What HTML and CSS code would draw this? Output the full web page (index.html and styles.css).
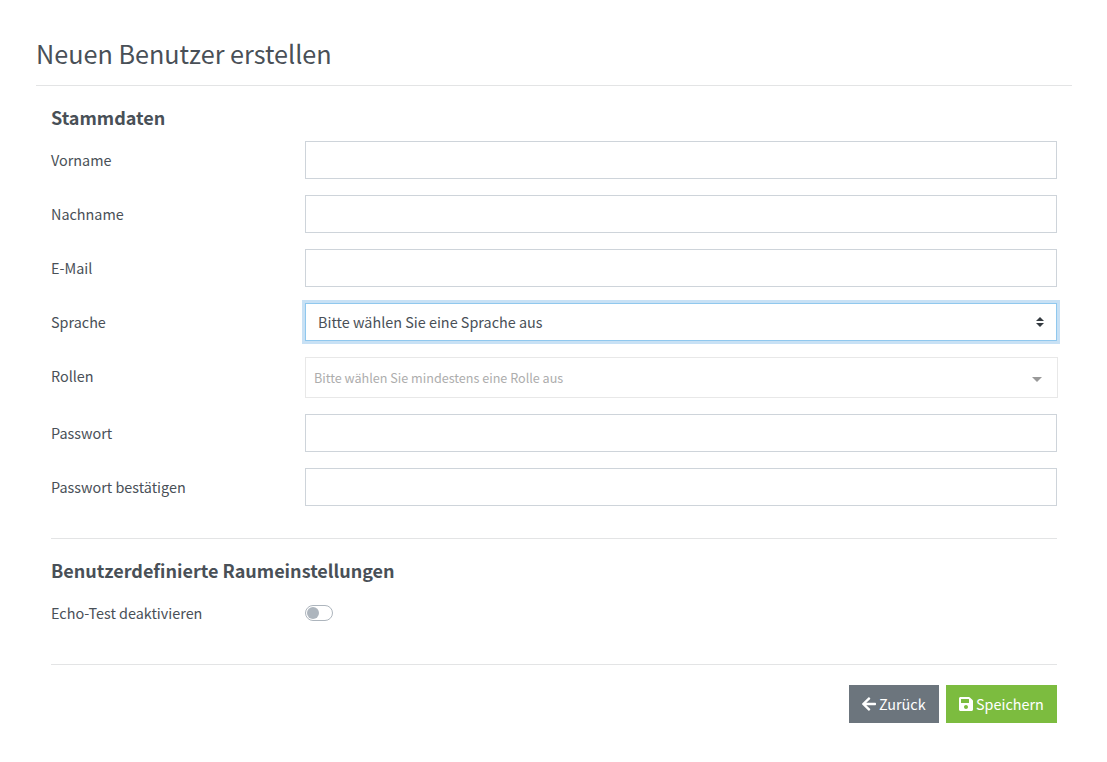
FILE: index.html
```html
<!DOCTYPE html>
<html lang="de">
<head>
<meta charset="utf-8">
<title>Neuen Benutzer erstellen</title>
<link rel="stylesheet" href="styles.css">
</head>
<body>
<main class="page">
  <h1 class="title"><span>Neuen Benutzer erstellen</span></h1>
  <form class="form">
    <h2 class="section-title">Stammdaten</h2>
    <div class="row"><label class="label" for="first">Vorname</label><input class="field" id="first" type="text"></div>
    <div class="row"><label class="label" for="last">Nachname</label><input class="field" id="last" type="text"></div>
    <div class="row"><label class="label" for="mail">E-Mail</label><input class="field" id="mail" type="email"></div>
    <div class="row"><span class="label">Sprache</span>
      <div class="field select" tabindex="0"><span>Bitte wählen Sie eine Sprache aus</span>
        <svg class="sort" viewBox="0 0 4 5" width="8" height="10"><path fill="#343a40" d="M2 0L0 2h4zm0 5L0 3h4z"/></svg>
      </div>
    </div>
    <div class="row"><span class="label">Rollen</span>
      <div class="roles"><span>Bitte wählen Sie mindestens eine Rolle aus</span><i class="caret"></i></div>
    </div>
    <div class="row"><label class="label" for="pw">Passwort</label><input class="field" id="pw" type="password"></div>
    <div class="row"><label class="label" for="pw2">Passwort bestätigen</label><input class="field" id="pw2" type="password"></div>
    <section class="section">
      <h2 class="section-title">Benutzerdefinierte Raumeinstellungen</h2>
      <div class="row"><span class="label">Echo-Test deaktivieren</span><span class="switch"><i class="knob"></i></span></div>
    </section>
    <footer class="actions">
      <button class="btn back" type="button"><svg class="icon" viewBox="0 0 448 512" width="14" height="16"><path fill="currentColor" d="M257.500 445.100l-22.200 22.200c-9.400 9.400-24.600 9.400-33.900 0L7 273c-9.400-9.400-9.400-24.600 0-33.900L201.400 44.700c9.400-9.400 24.600-9.400 33.900 0l22.200 22.200c9.500 9.500 9.300 25-.4 34.300L136.600 216H424c13.300 0 24 10.700 24 24v32c0 13.300-10.700 24-24 24H136.600l120.500 114.800c9.800 9.300 10 24.800.4 34.300z"/></svg><span>Zurück</span></button>
      <button class="btn save" type="button"><svg class="icon" viewBox="0 0 448 512" width="14" height="16"><path fill="currentColor" d="M433.941 129.941l-83.882-83.882A48 48 0 0 0 316.118 32H48C21.490 32 0 53.490 0 80v352c0 26.510 21.490 48 48 48h352c26.510 0 48-21.490 48-48V163.882a48 48 0 0 0-14.059-33.941zM224 416c-35.346 0-64-28.654-64-64 0-35.346 28.654-64 64-64s64 28.654 64 64c0 35.346-28.654 64-64 64zm96-304.520V212c0 6.627-5.373 12-12 12H76c-6.627 0-12-5.373-12-12V108c0-6.627 5.373-12 12-12h228.520c3.183 0 6.235 1.264 8.485 3.515l3.480 3.480A11.996 11.996 0 0 1 320 111.480z"/></svg><span>Speichern</span></button>
    </footer>
  </form>
</main>
</body>
</html>
```
FILE: styles.css
```css
* { box-sizing: border-box; }
body {
  margin: 0;
  background: #fff;
  color: #495057;
  font: 400 14.4px/24px "Noto Sans CJK SC", "Noto Sans", sans-serif;
}
.page { padding: 36px 35px 0 36px; }
.title {
  margin: 0;
  height: 50px;
  border-bottom: 1px solid #e3e4e5;
  font-size: 25.2px;
  font-weight: 400;
  line-height: 34px;
}
.form { padding: 20px 15px 0; }
.section-title { margin: 0 0 12px; font-size: 18px; font-weight: 700; line-height: 23px; }
.row { display: grid; grid-template-columns: 254px 1fr; margin-bottom: 16px; }
.label { padding-top: 7px; }
.field {
  width: 100%;
  height: 38px;
  padding: 6px 12px;
  border: 1px solid #ced4da;
  border-radius: 0;
  background: #fff;
  font: inherit;
  color: inherit;
  outline: 0;
}
.select {
  display: flex;
  align-items: center;
  justify-content: space-between;
  border-color: #90c8ee;
  box-shadow: 0 0 0 3px #c8e1f5;
}
.sort { display: block; }
.roles {
  display: flex;
  align-items: center;
  justify-content: space-between;
  width: 753px;
  height: 41px;
  padding: 0 15px 0 8px;
  border: 1px solid #e8e8e8;
  color: #adadad;
  font-size: 12.6px;
}
.caret {
  border: 5px solid transparent;
  border-top-color: #999;
  border-bottom: 0;
  margin-top: 3px;
}
.section { margin-top: 32px; padding-top: 20px; border-top: 1px solid #e3e4e5; }
.section .row { margin-bottom: 0; height: 38px; }
.switch {
  width: 28px;
  height: 16px;
  margin-top: 11px;
  padding: 2px 1px;
  border: 1px solid #adb5bd;
  border-radius: 8px;
}
.knob {
  display: block;
  width: 12px;
  height: 12px;
  margin-top: -1px;
  border-radius: 50%;
  background: #adb5bd;
}
.actions {
  display: flex;
  justify-content: flex-end;
  gap: 7px;
  margin-top: 32px;
  padding-top: 20px;
  border-top: 1px solid #e3e4e5;
}
.btn {
  display: flex;
  align-items: center;
  gap: 3px;
  height: 38px;
  padding: 0 13px;
  border: 0;
  color: #fff;
  font: inherit;
}
.back { width: 90px; background: #6c757d; }
.save { width: 111px; background: #7cbc3f; }
.icon { flex: none; }
```
